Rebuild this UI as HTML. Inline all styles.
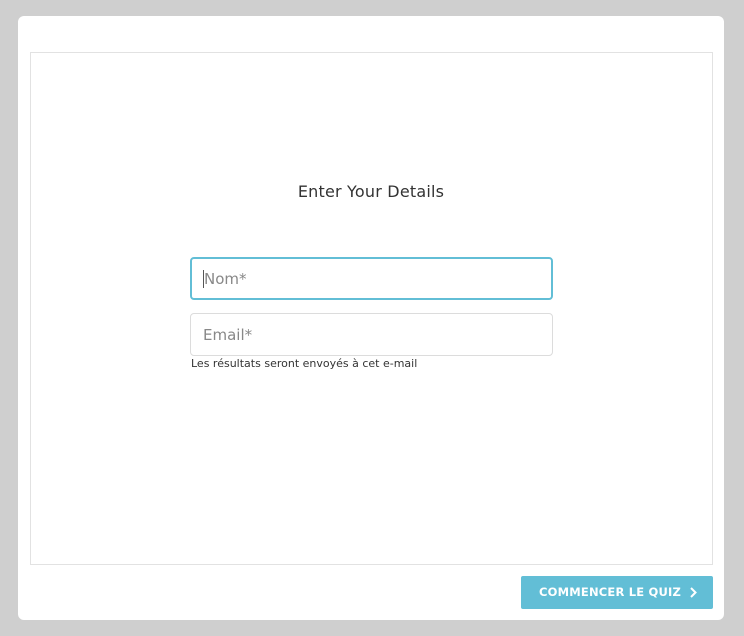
<!DOCTYPE html>
<html><head><meta charset="utf-8"><style>
body{margin:0;width:744px;height:636px;background:#cfcfcf;font-family:"DejaVu Sans","Liberation Sans",sans-serif;position:relative;overflow:hidden}
.card{position:absolute;left:18px;top:16px;width:706px;height:604px;background:#fff;border-radius:6px}
.inner{position:absolute;left:30px;top:52px;width:683px;height:513px;border:1px solid #e2e2e2;box-sizing:border-box}
h1{position:absolute;left:0;width:742px;top:182px;margin:0;text-align:center;font-size:16px;font-weight:normal;color:#333;letter-spacing:.2px}
.in{position:absolute;left:190px;width:363px;height:43px;box-sizing:border-box;border-radius:4px;font-size:15px;color:#888;padding:12px 0 0 12px}
.n{top:257px;border:2px solid #62bed6;padding-left:11px;padding-top:11px}
.e{top:313px;border:1px solid #dcdcdc}
.hint{position:absolute;left:191px;top:357px;font-size:11px;color:#333}
.btn{position:absolute;left:521px;top:576px;width:192px;height:33px;background:#62bed6;border-radius:2px;color:#fff;font-size:11.5px;font-weight:bold;letter-spacing:.2px;line-height:33px;padding-left:18px;box-sizing:border-box;white-space:nowrap}
.btn svg{position:absolute;right:16px;top:11px}
</style></head><body>
<div class="card"></div>
<div class="inner"></div>
<h1>Enter Your Details</h1>
<div class="in n"><span style="border-left:1px solid #555;margin-left:0"></span>Nom*</div>
<div class="in e">Email*</div>
<div class="hint">Les résultats seront envoyés à cet e-mail</div>
<div class="btn">COMMENCER LE QUIZ<svg width="7" height="11" viewBox="0 0 7 11"><path d="M1 1l4.5 4.5L1 10" stroke="#fff" stroke-width="2" fill="none"/></svg></div>
</body></html>
